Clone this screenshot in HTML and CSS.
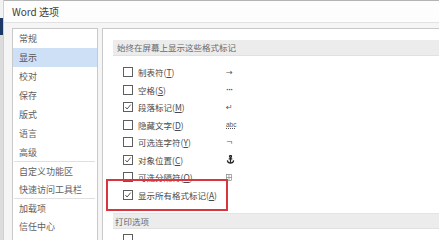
FILE: index.html
```html
<!DOCTYPE html>
<html lang="zh-CN">
<head>
<meta charset="utf-8">
<title>Word 选项</title>
<link rel="stylesheet" href="styles.css">
</head>
<body>
<div class="page">
  <div class="edge"><i class="e1"></i><i class="e2"></i><i class="e3"></i></div>
  <div class="win">
    <div class="title">Word 选项</div>
    <div class="body">
      <ul class="nav">
        <li>常规</li>
        <li class="sel">显示</li>
        <li>校对</li>
        <li>保存</li>
        <li>版式</li>
        <li>语言</li>
        <li>高级</li>
        <li class="grp">自定义功能区</li>
        <li>快速访问工具栏</li>
        <li class="grp">加载项</li>
        <li>信任中心</li>
      </ul>
      <div class="content">
        <div class="band">始终在屏幕上显示这些格式标记</div>
        <div class="rows">
          <div class="row"><span class="cb"></span><span class="lbl">制表符(<u>T</u>)</span><span class="sym">→</span></div>
          <div class="row"><span class="cb"></span><span class="lbl">空格(<u>S</u>)</span><span class="sym dots">···</span></div>
          <div class="row"><span class="cb on"><svg viewBox="0 0 9 9"><polyline points="1.5,4.5 3.5,6.8 7.5,1.8"/></svg></span><span class="lbl">段落标记(<u>M</u>)</span><span class="sym">↵</span></div>
          <div class="row"><span class="cb"></span><span class="lbl">隐藏文字(<u>D</u>)</span><span class="sym abc">abc</span></div>
          <div class="row"><span class="cb"></span><span class="lbl">可选连字符(<u>Y</u>)</span><span class="sym">¬</span></div>
          <div class="row"><span class="cb on"><svg viewBox="0 0 9 9"><polyline points="1.5,4.5 3.5,6.8 7.5,1.8"/></svg></span><span class="lbl">对象位置(<u>C</u>)</span><span class="sym"><svg class="anchor" viewBox="0 0 10 10"><circle cx="5" cy="1.6" r="1.1"/><path d="M5 2.7V9M3 4.2H7M1.5 6Q2 9 5 9Q8 9 8.5 6"/></svg></span></div>
          <div class="row"><span class="cb"></span><span class="lbl">可选分隔符(<u>O</u>)</span><span class="sym"><svg class="brk" viewBox="0 0 8 9"><rect x="0.5" y="0.5" width="7" height="8"/><path d="M0.5 4.5H7.5M4 0.5V8.5"/></svg></span></div>
          <div class="row last"><span class="cb on"><svg viewBox="0 0 9 9"><polyline points="1.5,4.5 3.5,6.8 7.5,1.8"/></svg></span><span class="lbl wide">显示所有格式标记(<u>A</u>)</span></div>
        </div>
        <div class="band print">打印选项</div>
        <div class="row partial"><span class="cb"></span><span class="lbl"></span></div>
      </div>
    </div>
  </div>
</div>
<div class="mark"></div>
</body>
</html>
```
FILE: styles.css
```css
html, body {
  margin: 0;
  padding: 0;
  width: 439px;
  height: 240px;
  overflow: hidden;
  background: #ffffff;
  font-family: "Noto Sans CJK SC", "Noto Sans", sans-serif;
}
.page {
  display: flex;
  width: 439px;
  height: 240px;
}
.edge {
  width: 3px;
  display: flex;
  flex-direction: column;
}
.edge i { display: block; }
.edge .e1 { height: 18px; background: #f2f2f2; }
.edge .e2 { height: 17px; background: #1d3a66; }
.edge .e3 { flex: 1; background: #dcdcdc; }
.win {
  flex: 1;
  display: flex;
  flex-direction: column;
  border-left: 1px solid #d0d0d0;
  min-width: 0;
}
.title {
  height: 21px;
  border-top: 1px solid #b4b4b4;
  line-height: 21px;
  padding-left: 8px;
  font-size: 10px;
  color: #404040;
  background: #fdfdfd;
}
.body {
  flex: 1;
  display: flex;
  border-top: 1px solid #e2e2e2;
  padding-top: 5px;
  padding-left: 8px;
  background: #f5f5f5;
  min-height: 0;
}
.nav {
  list-style: none;
  margin: 0;
  padding: 0;
  width: 84px;
  border: 1px solid #c9c9c9;
  border-bottom: none;
  background: #fff;
  font-size: 9px;
  color: #616161;
}
.nav li {
  height: 19px;
  line-height: 19px;
  padding-left: 6px;
}
.nav li.sel {
  background: #cde0f6;
  color: #555;
}
.nav li.grp {
  height: 18px;
  border-top: 1px solid #e0e0e0;
  margin-top: -1px;
  margin-left: 1px;
  margin-right: 2px;
  padding-left: 5px;
  line-height: 20px;
}
.content {
  flex: 1;
  margin-left: 4px;
  border-left: 1px solid #c9c9c9;
  border-top: 1px solid #c9c9c9;
  background: #fff;
  padding-top: 11px;
  min-width: 0;
}
.band {
  margin-left: 10px;
  height: 15px;
  line-height: 15px;
  background: #ececec;
  border-bottom: 1px solid #e1e1e1;
  padding-left: 4px;
  font-size: 8.5px;
  color: #6a6a6a;
}
.band.print {
  margin-top: 9px;
  border-top: 1px solid #e4e4e4;
  height: 14px;
  line-height: 14px;
  padding-left: 2px;
}
.rows {
  padding-top: 7.5px;
}
.row {
  height: 17.5px;
  display: flex;
  align-items: center;
  padding-left: 20px;
  font-size: 8.5px;
  color: #4a4a4a;
}
.row.last {
  height: 18px;
}
.row.partial {
  margin-top: 5px;
  align-items: flex-start;
}
.cb {
  width: 8px;
  height: 8px;
  border: 1px solid #5e5e5e;
  background: #fff;
  flex: none;
  display: flex;
}
.cb svg {
  width: 8px;
  height: 8px;
  fill: none;
  stroke: #444;
  stroke-width: 1;
}
.lbl {
  margin-left: 5px;
  width: 88px;
  white-space: nowrap;
}
.lbl.wide { width: auto; }
.lbl u { text-decoration: underline; text-underline-offset: 1px; }
.sym {
  font-family: "DejaVu Sans", sans-serif;
  font-size: 8px;
  color: #555;
  display: flex;
  align-items: center;
}
.sym.dots { letter-spacing: -0.5px; font-weight: bold; font-size: 7px; }
.sym.abc {
  font-size: 6.5px;
  text-decoration: underline dotted;
  font-family: "Liberation Sans", sans-serif;
}
.anchor {
  width: 9px;
  height: 9px;
  fill: none;
  stroke: #222;
  stroke-width: 1.4;
}
.brk {
  width: 6px;
  height: 7px;
  fill: none;
  stroke: #777;
  stroke-width: 0.8;
}
.mark {
  position: absolute;
  left: 106px;
  top: 179px;
  width: 118px;
  height: 28px;
  border: 2px solid #d8353d;
}
```
